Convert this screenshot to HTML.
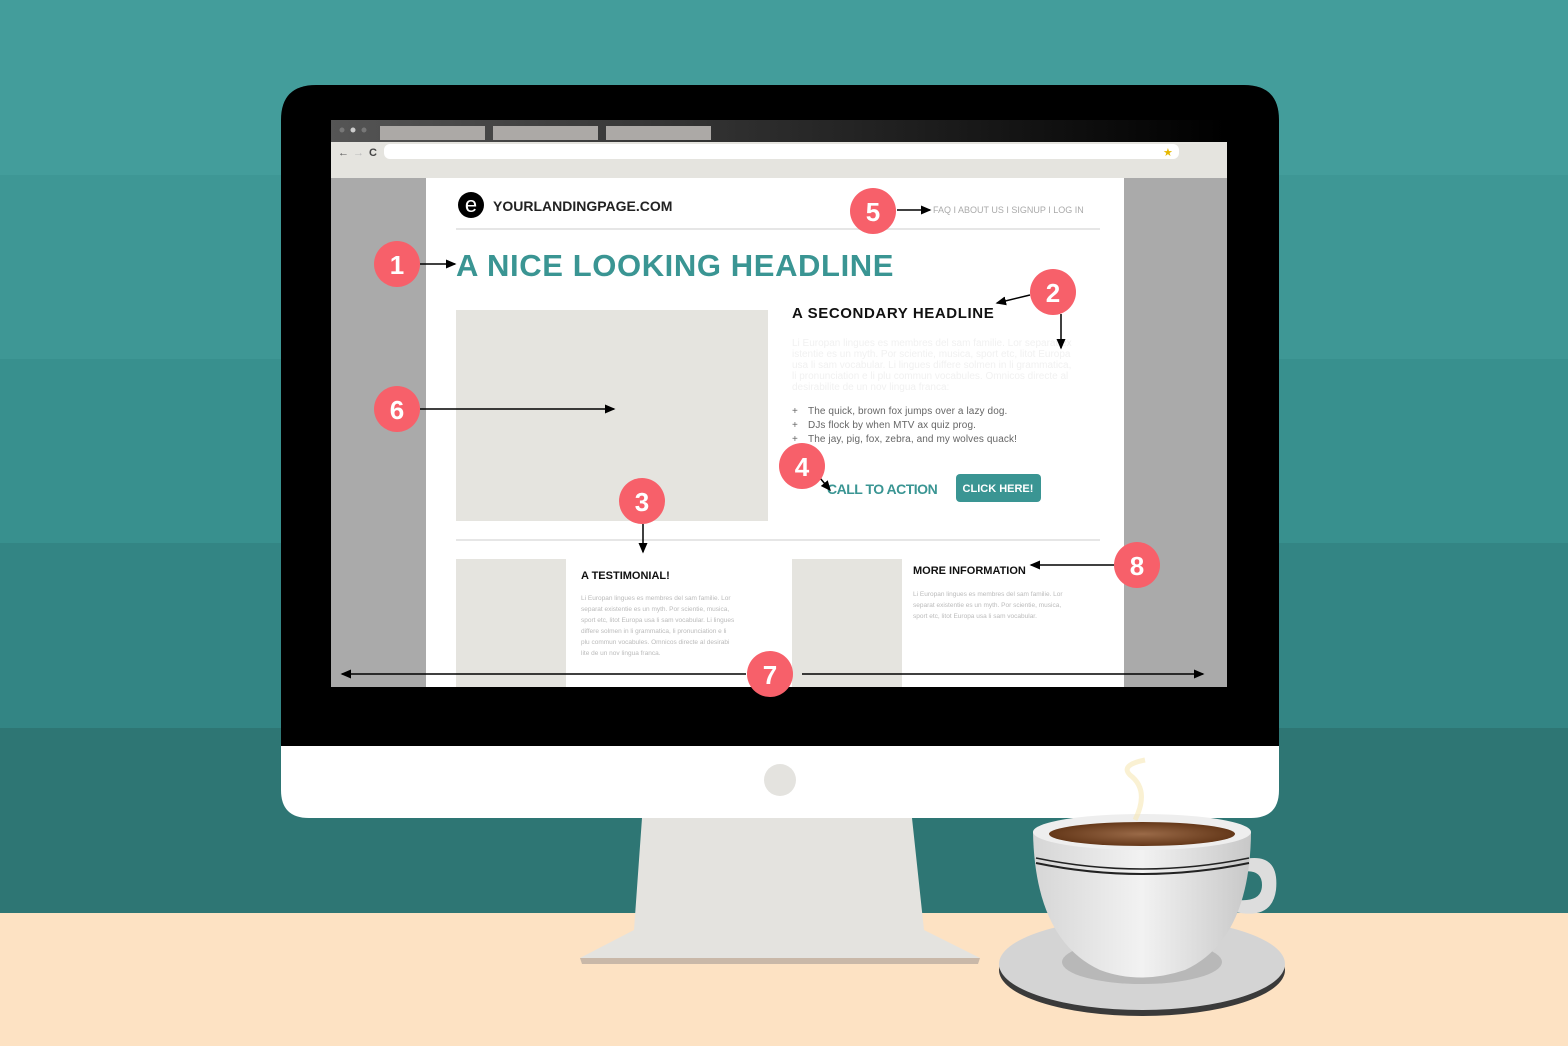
<!DOCTYPE html>
<html><head><meta charset="utf-8"><style>
html,body{margin:0;padding:0;width:1568px;height:1046px;overflow:hidden}
svg{display:block}
text{font-family:"Liberation Sans",sans-serif}
</style></head><body>
<svg width="1568" height="1046" viewBox="0 0 1568 1046" xmlns="http://www.w3.org/2000/svg">
<defs>
<marker id="ah" markerWidth="8" markerHeight="8" refX="6" refY="4" orient="auto"><path d="M0,1 L7,4 L0,7 Z" fill="#000"/></marker>
<radialGradient id="cof" cx="0.5" cy="0.5" r="0.6"><stop offset="0" stop-color="#9a6a48"/><stop offset="1" stop-color="#5a2e10"/></radialGradient>
<linearGradient id="cup" x1="0" y1="0" x2="1" y2="0"><stop offset="0" stop-color="#d6d6d6"/><stop offset="0.5" stop-color="#f2f2f2"/><stop offset="1" stop-color="#c8c8c8"/></linearGradient>
<linearGradient id="tb" x1="0" y1="0" x2="1" y2="0"><stop offset="0" stop-color="#555"/><stop offset="0.6" stop-color="#222"/><stop offset="1" stop-color="#000"/></linearGradient>
</defs>
<rect x="0" y="0" width="1568" height="175" fill="#439d9b"/>
<rect x="0" y="175" width="1568" height="184" fill="#3e9795"/>
<rect x="0" y="359" width="1568" height="184" fill="#38908e"/>
<rect x="0" y="543" width="1568" height="185" fill="#338584"/>
<rect x="0" y="728" width="1568" height="185" fill="#2e7674"/>
<rect x="0" y="913" width="1568" height="133" fill="#fde2c3"/>
<path d="M642,818 L912,818 L924,930 L980,958 L580,958 L634,930 Z" fill="#e4e3df"/>
<path d="M580,958 L980,958 L978,964 L582,964 Z" fill="#c9b8a8"/>
<path d="M281,120 Q281,85 316,85 L1244,85 Q1279,85 1279,120 L1279,746 L281,746 Z" fill="#000"/>
<path d="M281,746 L1279,746 L1279,790 Q1279,818 1251,818 L309,818 Q281,818 281,790 Z" fill="#fff"/>
<circle cx="780" cy="780" r="16" fill="#e4e3df"/>
<rect x="331" y="120" width="896" height="22" fill="url(#tb)"/>
<circle cx="342" cy="130" r="2.5" fill="#777"/><circle cx="353" cy="130" r="2.5" fill="#ccc"/><circle cx="364" cy="130" r="2.5" fill="#777"/>
<rect x="380" y="126" width="105" height="14" fill="#aca9a6"/>
<rect x="493" y="126" width="105" height="14" fill="#aca9a6"/>
<rect x="606" y="126" width="105" height="14" fill="#aca9a6"/>
<rect x="331" y="142" width="896" height="36" fill="#e5e4df"/>
<text x="338" y="156" font-size="11" font-weight="bold" fill="#555">←</text>
<text x="353" y="156" font-size="11" fill="#bbb">→</text>
<text x="369" y="156" font-size="11" font-weight="bold" fill="#444">C</text>
<rect x="384" y="144" width="795" height="15" rx="6" fill="#fff"/>
<text x="1163" y="156" font-size="11" fill="#e6b800">★</text>
<rect x="331" y="178" width="896" height="509" fill="#aaa"/>
<rect x="426" y="178" width="698" height="509" fill="#fff"/>
<circle cx="471" cy="205" r="13" fill="#000"/>
<text x="471" y="212" font-size="22" fill="#fff" text-anchor="middle">e</text>
<text x="493" y="211" font-size="14" font-weight="bold" fill="#222">YOURLANDINGPAGE.COM</text>
<text x="933" y="213" font-size="9" fill="#aaa">FAQ I ABOUT US I SIGNUP I LOG IN</text>
<line x1="456" y1="229" x2="1100" y2="229" stroke="#ddd" stroke-width="1.5"/>
<text x="456" y="276" font-size="31" font-weight="bold" fill="#3a9593" letter-spacing="0.6">A NICE LOOKING HEADLINE</text>
<rect x="456" y="310" width="312" height="211" fill="#e5e4df"/>
<text x="792" y="318" font-size="15" font-weight="bold" fill="#111" letter-spacing="0.6">A SECONDARY HEADLINE</text>
<g font-size="10" fill="#f1f1f1">
<text x="792" y="346">Li Europan lingues es membres del sam familie. Lor separat ex</text>
<text x="792" y="357">istentie es un myth. Por scientie, musica, sport etc, litot Europa</text>
<text x="792" y="368">usa li sam vocabular. Li lingues differe solmen in li grammatica,</text>
<text x="792" y="379">li pronunciation e li plu commun vocabules. Omnicos directe al</text>
<text x="792" y="390">desirabilite de un nov lingua franca:</text>
</g>
<g font-size="10" fill="#666">
<text x="792" y="414">+</text><text x="808" y="414" letter-spacing="0.1">The quick, brown fox jumps over a lazy dog.</text>
<text x="792" y="428">+</text><text x="808" y="428" letter-spacing="0.1">DJs flock by when MTV ax quiz prog.</text>
<text x="792" y="442">+</text><text x="808" y="442" letter-spacing="0.1">The jay, pig, fox, zebra, and my wolves quack!</text>
</g>
<text x="827" y="494" font-size="14" font-weight="bold" fill="#3a9593" letter-spacing="-0.5">CALL TO ACTION</text>
<rect x="956" y="474" width="85" height="28" rx="4" fill="#3a9593"/>
<text x="998" y="492" font-size="11" font-weight="bold" fill="#fff" text-anchor="middle">CLICK HERE!</text>
<line x1="456" y1="540" x2="1100" y2="540" stroke="#ddd" stroke-width="1.5"/>
<rect x="456" y="559" width="110" height="128" fill="#e5e4df"/>
<rect x="792" y="559" width="110" height="128" fill="#e5e4df"/>
<text x="581" y="579" font-size="11" font-weight="bold" fill="#111">A TESTIMONIAL!</text>
<text x="913" y="574" font-size="11" font-weight="bold" fill="#111">MORE INFORMATION</text>
<g font-size="6.5" fill="#bbb">
<text x="581" y="600">Li Europan lingues es membres del sam familie. Lor</text>
<text x="581" y="611">separat existentie es un myth. Por scientie, musica,</text>
<text x="581" y="622">sport etc, litot Europa usa li sam vocabular. Li lingues</text>
<text x="581" y="633">differe solmen in li grammatica, li pronunciation e li</text>
<text x="581" y="644">plu commun vocabules. Omnicos directe al desirabi</text>
<text x="581" y="655">lite de un nov lingua franca.</text>
<text x="913" y="596">Li Europan lingues es membres del sam familie. Lor</text>
<text x="913" y="607">separat existentie es un myth. Por scientie, musica,</text>
<text x="913" y="618">sport etc, litot Europa usa li sam vocabular.</text>
</g>
<g stroke="#000" stroke-width="1.5" fill="none" marker-end="url(#ah)">
<line x1="420" y1="264" x2="455" y2="264"/>
<line x1="1030" y1="295" x2="997" y2="303"/>
<line x1="1061" y1="314" x2="1061" y2="348"/>
<line x1="643" y1="524" x2="643" y2="552"/>
<line x1="820" y1="478" x2="830" y2="490"/>
<line x1="897" y1="210" x2="930" y2="210"/>
<line x1="420" y1="409" x2="614" y2="409"/>
<line x1="746" y1="674" x2="342" y2="674"/>
<line x1="802" y1="674" x2="1203" y2="674"/>
<line x1="1115" y1="565" x2="1031" y2="565"/>
</g>
<g fill="#f7606a">
<circle cx="397" cy="264" r="23"/><circle cx="1053" cy="292" r="23"/><circle cx="642" cy="501" r="23"/>
<circle cx="802" cy="466" r="23"/><circle cx="873" cy="211" r="23"/><circle cx="397" cy="409" r="23"/>
<circle cx="770" cy="674" r="23"/><circle cx="1137" cy="565" r="23"/>
</g>
<g font-size="26" font-weight="bold" fill="#fff" text-anchor="middle">
<text x="397" y="274">1</text><text x="1053" y="302">2</text><text x="642" y="511">3</text>
<text x="802" y="476">4</text><text x="873" y="221">5</text><text x="397" y="419">6</text>
<text x="770" y="684">7</text><text x="1137" y="575">8</text>
</g>
<ellipse cx="1142" cy="970" rx="143" ry="46" fill="#3a3a3a"/>
<ellipse cx="1142" cy="964" rx="143" ry="46" fill="#d4d4d4"/>
<ellipse cx="1142" cy="962" rx="80" ry="22" fill="#b8b8b8"/>
<path d="M1240,860 Q1280,850 1276,890 Q1272,920 1235,912 L1238,900 Q1262,902 1262,885 Q1262,868 1240,872 Z" fill="#ddd"/>
<path d="M1033,832 Q1035,940 1100,970 Q1140,985 1185,970 Q1250,940 1251,832 Z" fill="url(#cup)"/>
<ellipse cx="1142" cy="832" rx="109" ry="18" fill="#eee"/>
<ellipse cx="1142" cy="834" rx="93" ry="12" fill="url(#cof)"/>
<path d="M1036,858 Q1142,880 1249,858" stroke="#222" stroke-width="1.5" fill="none"/>
<path d="M1036,863 Q1142,885 1249,863" stroke="#222" stroke-width="2" fill="none"/>
<path d="M1135,820 Q1150,790 1130,775 Q1120,765 1145,760" stroke="#f6e7b5" stroke-width="5" fill="none" opacity="0.6"/>
</svg>
</body></html>
